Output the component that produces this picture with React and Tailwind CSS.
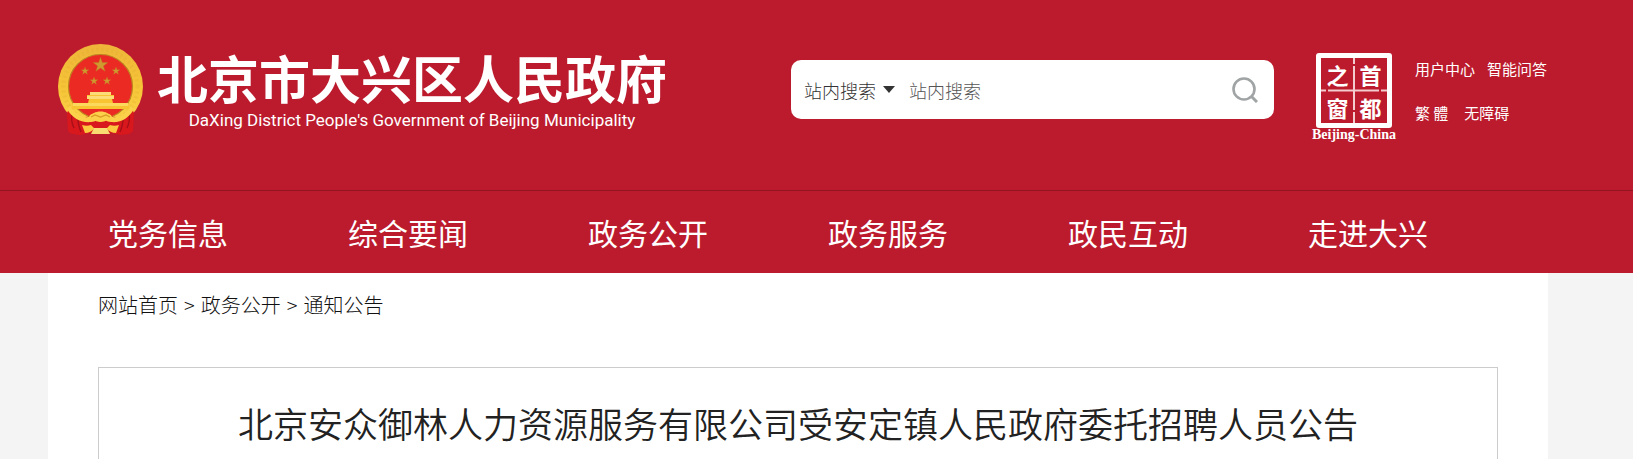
const NAV = ['党务信息', '综合要闻', '政务公开', '政务服务', '政民互动', '走进大兴']
const CRUMBS = ['网站首页', '政务公开', '通知公告']
const SEAL = ['之', '首', '窗', '都']

const STAR = 'M0 -10 L2.3 -3.1 L9.5 -3.1 L3.7 1.2 L5.9 8.1 L0 3.8 L-5.9 8.1 L-3.7 1.2 L-9.5 -3.1 L-2.3 -3.1 Z'
const STARS = [
  { x: 42.5, y: 21, s: 0.78 },
  { x: 27, y: 27, s: 0.42 },
  { x: 58, y: 27, s: 0.42 },
  { x: 36, y: 37, s: 0.42 },
  { x: 49, y: 37, s: 0.42 },
]

function Emblem() {
  return (
    <svg viewBox="0 0 86 92" className="h-[92px] w-[86px] shrink-0" aria-hidden="true">
      <defs>
        <linearGradient id="gold" x1="0" y1="0" x2="0" y2="1">
          <stop offset="0" stopColor="#eeb53a" />
          <stop offset="0.5" stopColor="#f6c437" />
          <stop offset="1" stopColor="#fbd44c" />
        </linearGradient>
      </defs>
      <circle cx="42.5" cy="42.5" r="42.5" fill="url(#gold)" />
      <circle cx="42.5" cy="42.5" r="37" fill="none" stroke="#e0a62c" strokeWidth="4" strokeDasharray="2 3" opacity="0.25" />
      <circle cx="42.5" cy="42.5" r="32" fill="#ec2a24" stroke="#bb8421" strokeWidth="1.2" />
      {STARS.map((p) => (
        <path key={`${p.x}-${p.y}`} d={STAR} transform={`translate(${p.x} ${p.y}) scale(${p.s})`} fill="#cf9a30" stroke="#b5761f" strokeWidth="0.5" />
      ))}
      <path d="M32 48h21v3h3v4h-2l1 4h14l3 6H13l3-6h14l1-4h-2v-4h3z" fill="#f9c431" />
      <path d="M32 48h21v3H32zM29 52h27v3H29z" fill="#fbdc76" />
      <path d="M15 59h55v3H15z" fill="#fbd95c" />
      <path d="M11 65c4 0 6 7 11 8 5 1 9-2 13 2 3 4 12 4 15 0 4-4 8-1 13-2 5-1 7-8 11-8l2 4-1 18c-3 4-8 3-12 4l-9-2H31l-9 2c-4-1-9 0-12-4l-1-18z" fill="#d8181c" />
      <path d="M14 70c-1 5 0 10 2 14M20 75c0 5 1 8 3 13M65 75c0 5-1 8-3 13M71 70c1 5 0 10-2 14" fill="none" stroke="#a80f18" strokeWidth="1.4" />
      <path d="M12 62c5 8 12 12 19 11 1-3 3-3 5-4 3-2 10-2 13 0 2 1 4 1 5 4 7 1 14-3 19-11l3 3c-5 9-13 14-23 13-5 0-6-3-10-3s-5 3-10 3c-10 1-19-4-24-13z" fill="#fbd04a" />
      <path d="M33 73l4-2 5.5 2 5.5-2 4 2" fill="none" stroke="#d99a24" strokeWidth="1.2" />
      <path d="M24 81c3 1 6 1 9 0l3 3h13l3-3c3 1 6 1 9 0l-3 8c-4 0-7-2-9-4H36c-2 2-5 4-9 4z" fill="#fbc840" />
      <path d="M36 84h13l3 6H33z" fill="#f8dc72" />
    </svg>
  )
}

function SearchBox() {
  return (
    <form className="flex h-[59px] w-[483px] shrink-0 items-center rounded-[10px] bg-white pr-4 pl-[13px] text-lg font-light text-[#333]">
      <label className="flex items-center gap-[7px]">
        <select aria-label="搜索范围" className="w-[72px] appearance-none bg-transparent p-0 outline-none">
          <option>站内搜索</option>
        </select>
        <svg viewBox="0 0 12 7" className="w-3" aria-hidden="true">
          <path d="M0 0h12L6 7z" fill="#333" />
        </svg>
      </label>
      <input
        type="text"
        aria-label="站内搜索"
        placeholder="站内搜索"
        className="ml-[14px] min-w-0 flex-1 bg-transparent outline-none placeholder:text-[#555]"
      />
      <button type="submit" aria-label="搜索" className="shrink-0">
        <svg viewBox="0 0 26 26" className="size-[26px]" fill="none" stroke="#a0a4a5" strokeWidth="2.6" aria-hidden="true">
          <circle cx="12" cy="12" r="10.5" />
          <path d="M19.5 19.5l5.5 5.5" strokeWidth="3" />
        </svg>
      </button>
    </form>
  )
}

function CapitalWindow() {
  return (
    <a href="#" className="flex w-[84px] shrink-0 flex-col items-center">
      <span className="relative grid h-[75px] w-[76px] grid-cols-2 grid-rows-2 rounded-[3px] border-[5px] border-white">
        <svg viewBox="0 0 66 65" className="absolute inset-0 h-full w-full" stroke="#f3ccd0" strokeWidth="2" aria-hidden="true">
          <path d="M33 0v6M33 8v44M33 54v11M0 32.5h5M7 32.5h51M60 32.5h6" />
        </svg>
        {SEAL.map((c) => (
          <span key={c} className="flex items-center justify-center text-[22px] leading-none font-bold">{c}</span>
        ))}
      </span>
      <span className="font-['Liberation_Serif',serif] text-[14px] leading-[14px] font-bold whitespace-nowrap">Beijing-China</span>
    </a>
  )
}

export default function App() {
  return (
    <div className="flex min-h-screen flex-col bg-[#f4f4f4] font-['Noto_Sans_CJK_SC',sans-serif]">
      <header className="bg-[#bc1b2d] text-white">
        <div className="flex h-[191px] items-start border-b border-[#921622] pr-[86px] pl-[58px]">
          <a href="#" className="mt-11 flex shrink-0 gap-[13px]">
            <Emblem />
            <span className="flex flex-col items-center pt-[2px]">
              <span className="text-[51px] leading-[62px] font-bold">北京市大兴区人民政府</span>
              <span className="font-[Roboto,sans-serif] text-[17px] leading-6">DaXing District People's Government of Beijing Municipality</span>
            </span>
          </a>
          <div className="mt-[60px] ml-auto">
            <SearchBox />
          </div>
          <div className="mt-[53px] ml-[38px]">
            <CapitalWindow />
          </div>
          <div className="mt-[58px] ml-[19px] flex shrink-0 flex-col gap-[22px] text-[15px] leading-[22px]">
            <div className="flex gap-3">
              <a href="#">用户中心</a>
              <a href="#">智能问答</a>
            </div>
            <div className="flex gap-4">
              <a href="#">繁 體</a>
              <a href="#">无障碍</a>
            </div>
          </div>
        </div>
        <nav className="flex h-[82px] pl-12">
          {NAV.map((item) => (
            <a key={item} href="#" className="flex w-60 items-center justify-center text-[30px] leading-none">{item}</a>
          ))}
        </nav>
      </header>

      <main className="mr-[85px] ml-12 flex flex-1 flex-col bg-white px-[50px] pt-4">
        <nav className="flex h-8 items-center gap-[6px] text-xl font-light text-[#111]">
          {CRUMBS.map((c, i) => (
            <span key={c} className="flex gap-[6px]">
              {i > 0 && <span>&gt;</span>}
              <a href="#">{c}</a>
            </span>
          ))}
        </nav>
        <article className="mt-[46px] flex-1 border border-b-0 border-[#ccc] pt-[30px]">
          <h1 className="text-center text-[35px] leading-[50px] font-[350] text-[#222]">
            北京安众御林人力资源服务有限公司受安定镇人民政府委托招聘人员公告
          </h1>
        </article>
      </main>
    </div>
  )
}
